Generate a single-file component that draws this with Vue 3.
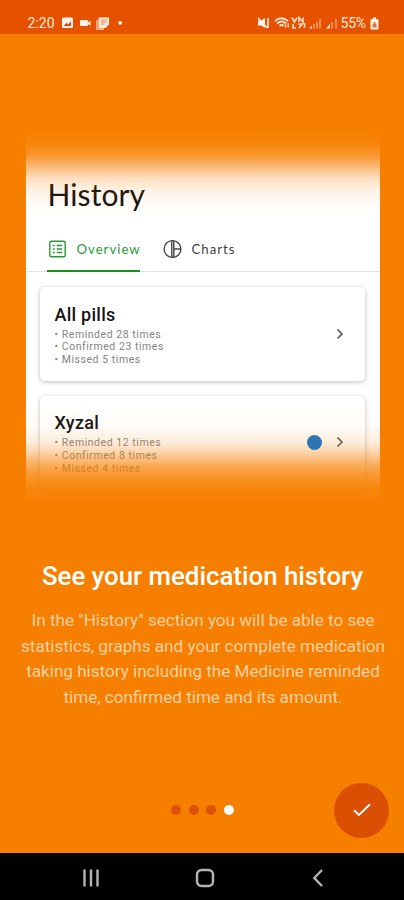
<script setup>
import { ref } from 'vue';

const pills = [
  { name: 'All pills', reminded: 28, confirmed: 23, missed: 5, color: null },
  { name: 'Xyzal', reminded: 12, confirmed: 8, missed: 4, color: '#2f74b5' },
];

const description = [
  'In the "History" section you will be able to see',
  'statistics, graphs and your complete medication',
  'taking history including the Medicine reminded',
  'time, confirmed time and its amount.',
];

const pageCount = 4;
const page = ref(3);
const tab = ref('overview');
</script>

<template>
  <div class="screen">
    <header class="status-bar">
      <span class="clock">2:20</span>
      <svg class="status-left" width="70" height="14" viewBox="0 0 70 14">
        <rect x="1" y="1.5" width="11" height="10.5" rx="1.5" fill="#fff3e6" />
        <path d="M2.8 10 5.3 6.8 7 8.600 10 5.200V10z" fill="#d2452a" />
        <rect x="19" y="4" width="8" height="6" rx="1.2" fill="#fff3e6" />
        <path d="M26.500 6.500 29.500 5V9.500L26.500 8z" fill="#fff3e6" />
        <path d="M37.500 1.500H48V8.500L44.500 12H37.500z" fill="#ffe9d8" />
        <path d="M36 4V13H43" fill="none" stroke="#ffd0ad" stroke-width="1.300" />
        <path d="M40 4H46M40 6H46M40 8H43.500" stroke="#d9804e" stroke-width=".9" />
        <rect x="57.500" y="5" width="3.500" height="3.500" rx=".8" fill="#fff3e6" />
      </svg>
      <svg class="status-right" width="82" height="14" viewBox="0 0 82 14">
        <path d="M1 4.500H4L8 2V12L4 9.500H1z" fill="#fff3e6" />
        <path d="M1 2 10.500 12M11 2V12" stroke="#fff3e6" stroke-width="1.500" />
        <path d="M18 5Q24-.5 31 5M20 7.500Q24.500 3.500 29 7.500M22.500 10Q24.500 8 26.500 10" fill="none" stroke="#ffe3cc" stroke-width="1.900" />
        <path d="M28.500 7.500V12M31.200 7V11.500" stroke="#ffe3cc" stroke-width="1.300" />
        <path d="M35 1.500 37.500 6 40 1.500M42 6V1.500L46 6V1.500M36 8V12H39M41 8H45L42 12M47.500 7V12" fill="none" stroke="#ffd9bb" stroke-width="1.700" />
        <path d="M52 12.500H55V9.500zM69 12.500H73V8z" fill="#ffe3cc" />
        <path d="M57 12.500V8M60 12.500V6M63 12.500V3M75 12.500V6M79 12.500V3" stroke="#f4a06d" stroke-width="1.500" />
      </svg>
      <span class="battery-text">55%</span>
      <svg class="battery" width="9" height="13" viewBox="0 0 9 13">
        <path d="M3 .5H6V2H7.500Q8.500 2 8.500 3V11.500Q8.500 12.500 7.500 12.500H1.500Q.5 12.500 .5 11.500V3Q.5 2 1.500 2H3z" fill="#fff3e6" />
        <path d="M2.500 7H6.500V10.500H2.500zM3.500 7V5H5.500V7" fill="#e07a45" />
      </svg>
    </header>

    <main class="intro">
      <section class="preview">
        <h1 class="preview-title">History</h1>
        <nav class="tabs">
          <button class="tab" :class="{ active: tab === 'overview' }" @click="tab = 'overview'">
            <svg width="20" height="20" viewBox="0 0 20 20" fill="none" stroke="currentColor" stroke-width="1.400">
              <rect x="2.800" y="2.300" width="15.400" height="15.400" rx="1.500" />
              <path d="M5.800 6.500H7.800M5.800 10H7.800M5.800 13.500H7.800M9.700 6.500H15.200M9.700 10H15.200M9.700 13.500H15.200" />
            </svg>
            <span>Overview</span>
          </button>
          <button class="tab charts" :class="{ active: tab === 'charts' }" @click="tab = 'charts'">
            <svg width="20" height="20" viewBox="0 0 20 20" fill="none" stroke="currentColor" stroke-width="1.400">
              <circle cx="10.500" cy="10" r="8.400" />
              <path d="M9.800 1.600V18.400M11.800 1.800V18.200M11.800 10H18.900" />
            </svg>
            <span>Charts</span>
          </button>
        </nav>
        <div class="cards">
          <article v-for="pill in pills" :key="pill.name" class="card">
            <div class="info">
              <h2>{{ pill.name }}</h2>
              <p>• Reminded {{ pill.reminded }} times</p>
              <p>• Confirmed {{ pill.confirmed }} times</p>
              <p>• Missed {{ pill.missed }} times</p>
            </div>
            <span v-if="pill.color" class="pill-dot" :style="{ backgroundColor: pill.color }"></span>
            <svg class="chevron" width="8" height="12" viewBox="0 0 8 12">
              <path d="M1.500 1.500 6 6 1.500 10.500" fill="none" stroke="#555" stroke-width="1.600" />
            </svg>
          </article>
        </div>
        <div class="fade"></div>
      </section>

      <h2 class="headline">See your medication history</h2>
      <p class="description">
        <span v-for="line in description" :key="line">{{ line }}</span>
      </p>

      <footer class="controls">
        <div class="dots">
          <span v-for="n in pageCount" :key="n" class="dot" :class="{ current: page === n - 1 }" @click="page = n - 1"></span>
        </div>
        <button class="done">
          <svg width="20" height="16" viewBox="0 0 20 16">
            <path d="M2 8.300 6.900 13 18 2.200" fill="none" stroke="#fff" stroke-width="1.900" />
          </svg>
        </button>
      </footer>
    </main>

    <footer class="nav-bar">
      <svg width="18" height="20" viewBox="0 0 18 20">
        <path d="M2.500 1.500V18.500M9 1.500V18.500M15.500 1.500V18.500" stroke="#b4b4b4" stroke-width="2.400" />
      </svg>
      <svg class="home" width="20" height="20" viewBox="0 0 20 20">
        <rect x="2" y="2" width="16" height="16" rx="4.500" fill="none" stroke="#b4b4b4" stroke-width="2.400" />
      </svg>
      <svg width="12" height="20" viewBox="0 0 12 20">
        <path d="M10 2 2.300 10 10 18" fill="none" stroke="#b4b4b4" stroke-width="2.400" />
      </svg>
    </footer>
  </div>
</template>

<style>
body {
  margin: 0;
}
</style>

<style scoped>
.screen {
  display: flex;
  flex-direction: column;
  width: 404px;
  height: 900px;
  overflow: hidden;
  background: #f77f00;
  font-family: Roboto, "Liberation Sans", sans-serif;
}

h1, h2, p {
  margin: 0;
}

button {
  border: none;
  padding: 0;
  background: none;
  font: inherit;
  cursor: pointer;
}

svg {
  display: block;
  flex: none;
}

.status-bar {
  display: flex;
  align-items: center;
  box-sizing: border-box;
  height: 33.5px;
  padding: 13px 25.5px 0 27.5px;
  background: #e65100;
  color: #ffeadb;
  font-size: 14px;
}
.clock {
  width: 33.5px;
}
.status-right {
  margin-left: auto;
}
.battery-text {
  width: 29px;
  margin-left: 2px;
  font-size: 14px;
  letter-spacing: -0.2px;
}

.intro {
  flex: 1;
  display: flex;
  flex-direction: column;
  padding-top: 96.5px;
}

.preview {
  position: relative;
  box-sizing: border-box;
  width: 354px;
  height: 375px;
  margin-left: 25.5px;
  padding-top: 42.5px;
  overflow: hidden;
  background: #fff;
}
.preview-title {
  padding-left: 22px;
  font: 400 30px/42px Lato, sans-serif;
  letter-spacing: 0.1px;
  color: #111;
}
.tabs {
  display: flex;
  height: 56.5px;
  padding-left: 21.5px;
  border-bottom: 1.5px solid #e2e2e2;
}
.tab {
  display: flex;
  align-items: center;
  box-sizing: border-box;
  height: 57.5px;
  padding-top: 14px;
  border-bottom: 2px solid transparent;
  color: #444;
  font: 400 13.2px/20px Lato, sans-serif;
  letter-spacing: 1px;
}
.tab span {
  margin-left: 9.5px;
}
.tab.active {
  width: 93px;
  border-bottom-color: #15921b;
  color: #2a9a35;
}
.charts {
  margin-left: 22px;
}

.cards {
  display: flex;
  flex-direction: column;
  gap: 15px;
  padding: 15px 15px 0 14.5px;
}
.card {
  display: flex;
  align-items: center;
  box-sizing: border-box;
  height: 93.5px;
  padding: 0 21px 0 14.5px;
  border-radius: 5px;
  background: #fff;
  box-shadow: 0 1px 5px rgba(0, 0, 0, 0.26);
}
.info {
  flex: 1;
  padding-top: 2px;
}
.info h2 {
  margin-bottom: 2px;
  font-size: 18px;
  line-height: 24px;
  font-weight: 500;
  letter-spacing: 0.25px;
  color: #151515;
}
.info p {
  font-size: 10.5px;
  line-height: 12.7px;
  letter-spacing: 0.55px;
  color: #848484;
}
.pill-dot {
  position: relative;
  z-index: 1;
  width: 15px;
  height: 15px;
  margin-right: 14px;
  border-radius: 50%;
}

.fade {
  position: absolute;
  inset: 0;
  pointer-events: none;
  background: linear-gradient(
    to bottom,
    #f77f00 0,
    rgba(247, 127, 0, 0.94) 16px,
    rgba(247, 127, 0, 0.78) 27px,
    rgba(247, 127, 0, 0.53) 37px,
    rgba(247, 127, 0, 0.24) 49px,
    rgba(247, 127, 0, 0.09) 62px,
    rgba(247, 127, 0, 0) 82px,
    rgba(247, 127, 0, 0) 279px,
    rgba(247, 127, 0, 0.04) 298px,
    rgba(247, 127, 0, 0.14) 312px,
    rgba(247, 127, 0, 0.31) 321px,
    rgba(247, 127, 0, 0.58) 332px,
    rgba(247, 127, 0, 0.79) 343px,
    rgba(247, 127, 0, 0.93) 356px,
    #f77f00 371px
  );
}

.headline {
  margin-top: 55px;
  padding-left: 1px;
  font-size: 25.8px;
  line-height: 32px;
  font-weight: 500;
  text-align: center;
  white-space: nowrap;
  color: #fff;
}
.description {
  display: flex;
  flex-direction: column;
  align-items: center;
  margin-top: 16px;
  padding-left: 2px;
  font-size: 17.1px;
  line-height: 25.6px;
  white-space: nowrap;
  color: #fdd0a2;
}

.controls {
  display: grid;
  grid-template-columns: 1fr auto 1fr;
  align-items: center;
  margin-top: auto;
  padding: 0 15px 15.5px;
}
.dots {
  grid-column: 2;
  display: flex;
  gap: 7.6px;
  padding-left: 1px;
}
.dot {
  width: 10px;
  height: 10px;
  border-radius: 50%;
  background: #db5204;
}
.dot.current {
  background: #fff;
}
.done {
  justify-self: end;
  display: flex;
  align-items: center;
  justify-content: center;
  width: 55px;
  height: 55px;
  border-radius: 50%;
  background: #db4f02;
}

.nav-bar {
  display: flex;
  align-items: center;
  justify-content: space-between;
  box-sizing: border-box;
  height: 47px;
  padding: 2px 80px 0 82px;
  background: #000;
}
.home {
  margin-right: 3px;
}
</style>
